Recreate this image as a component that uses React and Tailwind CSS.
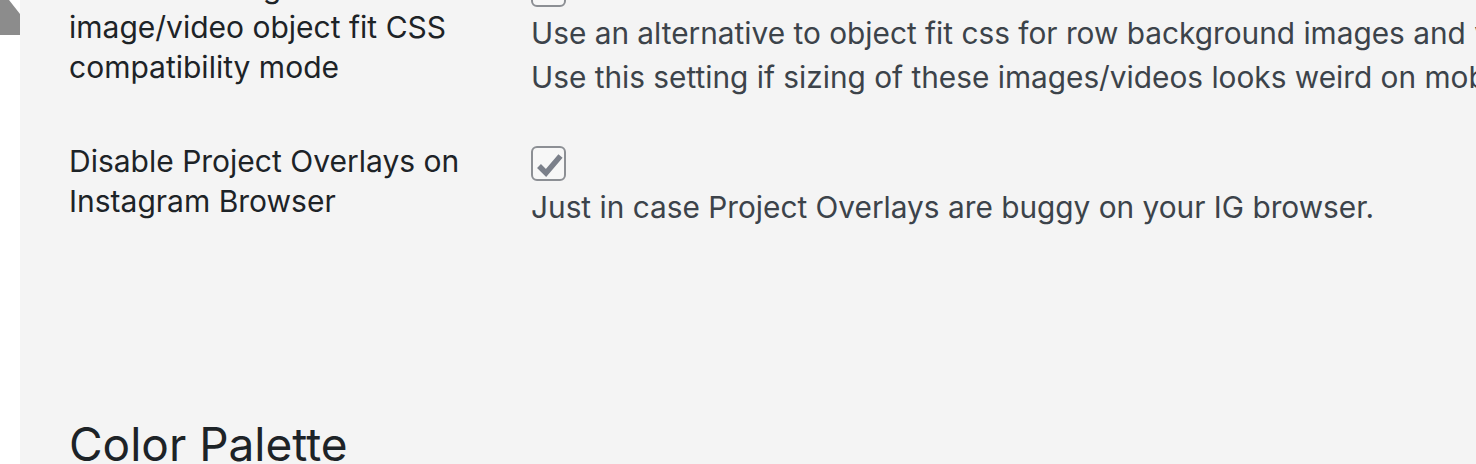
import React from 'react';

const font = { fontFamily: 'Inter, "Liberation Sans", sans-serif' };

const Checkbox = ({ checked }) => (
    <div className="w-[35px] h-[35px] rounded-[6px] border-2 border-[#8c8f94] bg-[#f7f7f7] flex items-center justify-center">
        {checked && (
            <svg width="35" height="35" viewBox="0 0 35 35" className="-m-[2px]">
                <path d="M8 20 L15 27 L29.5 10" fill="none" stroke="#7b808a" strokeWidth="5.5" strokeLinejoin="miter" />
            </svg>
        )}
    </div>
);

const SettingRow = ({ label, checked, lines, className = '' }) => (
    <div className={`grid grid-cols-[462px_1fr] ${className}`}>
        <div className="text-[30px] leading-[40px] text-[#1d2327] pr-4">
            {label.map((l) => (
                <div key={l} className="whitespace-nowrap">{l}</div>
            ))}
        </div>
        <div className="pt-[5px]">
            <Checkbox checked={checked} />
            <div className="mt-[4px] text-[29.8px] leading-[44px] text-[#3c434a]">
                {lines.map((l) => (
                    <div key={l} className="whitespace-nowrap">{l}</div>
                ))}
            </div>
        </div>
    </div>
);

const App = () => {
    return (
        <div className="flex w-full h-[464px] overflow-hidden bg-white" style={font}>
            {/* admin menu strip */}
            <div className="w-[20px] shrink-0 bg-white">
                <svg width="20" height="35" viewBox="0 0 20 35">
                    <polygon points="0,0 9,0 20,14 20,35 0,35" fill="#8c8c8c" />
                </svg>
            </div>

            <div className="flex-1 min-w-0 bg-[#f4f4f4] overflow-hidden">
                <div className="pl-[49px] -mt-[33px]">
                    <SettingRow
                        label={['Use row background', 'image/video object fit CSS', 'compatibility mode']}
                        checked={false}
                        lines={[
                            'Use an alternative to object fit css for row background images and videos.',
                            'Use this setting if sizing of these images/videos looks weird on mobile devices.',
                        ]}
                    />
                    <SettingRow
                        className="mt-[42px]"
                        label={['Disable Project Overlays on', 'Instagram Browser']}
                        checked={true}
                        lines={['Just in case Project Overlays are buggy on your IG browser.']}
                    />
                    <h2 className="mt-[192px] text-[46px] leading-none text-[#1d2327] whitespace-nowrap">
                        Color Palette
                    </h2>
                </div>
            </div>
        </div>
    );
};

export default App;
